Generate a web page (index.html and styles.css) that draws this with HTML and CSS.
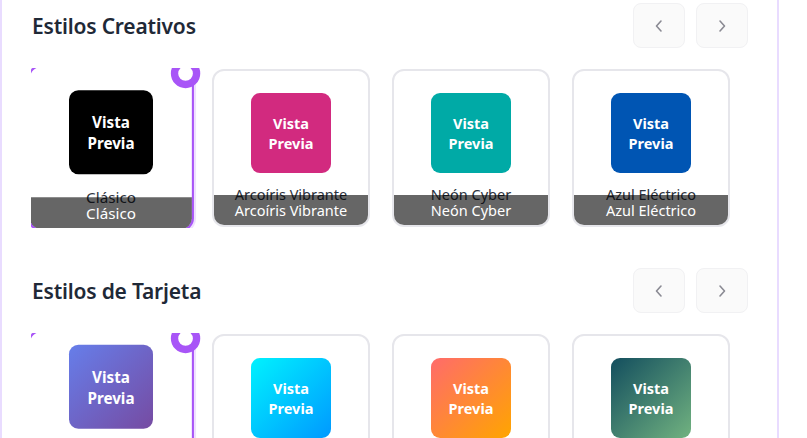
FILE: index.html
```html
<!DOCTYPE html>
<html lang="es">
<head>
<meta charset="utf-8">
<title>Estilos</title>
<link rel="stylesheet" href="styles.css">
</head>
<body>
<div class="panel">
  <section class="section">
    <div class="section-head">
      <h2 class="title">Estilos Creativos</h2>
      <div class="nav">
        <button class="nav-btn" aria-label="Anterior"><svg width="12" height="14" viewBox="0 0 12 14"><path d="M8 2 L3.5 7 L8 12" fill="none" stroke="#8a8a93" stroke-width="1.6" stroke-linecap="round" stroke-linejoin="round"/></svg></button>
        <button class="nav-btn" aria-label="Siguiente"><svg width="12" height="14" viewBox="0 0 12 14"><path d="M4 2 L8.5 7 L4 12" fill="none" stroke="#8a8a93" stroke-width="1.6" stroke-linecap="round" stroke-linejoin="round"/></svg></button>
      </div>
    </div>
    <div class="track">
      <div class="card selected">
        <span class="badge"></span>
        <div class="preview p-black">Vista<br>Previa</div>
        <div class="name">Clásico</div>
        <div class="overlay">Clásico</div>
      </div>
      <div class="card">
        <div class="preview p-pink">Vista<br>Previa</div>
        <div class="name">Arcoíris Vibrante</div>
        <div class="overlay">Arcoíris Vibrante</div>
      </div>
      <div class="card">
        <div class="preview p-teal">Vista<br>Previa</div>
        <div class="name">Neón Cyber</div>
        <div class="overlay">Neón Cyber</div>
      </div>
      <div class="card">
        <div class="preview p-blue">Vista<br>Previa</div>
        <div class="name">Azul Eléctrico</div>
        <div class="overlay">Azul Eléctrico</div>
      </div>
    </div>
  </section>

  <section class="section">
    <div class="section-head">
      <h2 class="title">Estilos de Tarjeta</h2>
      <div class="nav">
        <button class="nav-btn" aria-label="Anterior"><svg width="12" height="14" viewBox="0 0 12 14"><path d="M8 2 L3.5 7 L8 12" fill="none" stroke="#8a8a93" stroke-width="1.6" stroke-linecap="round" stroke-linejoin="round"/></svg></button>
        <button class="nav-btn" aria-label="Siguiente"><svg width="12" height="14" viewBox="0 0 12 14"><path d="M4 2 L8.5 7 L4 12" fill="none" stroke="#8a8a93" stroke-width="1.6" stroke-linecap="round" stroke-linejoin="round"/></svg></button>
      </div>
    </div>
    <div class="track">
      <div class="card selected card-tall">
        <span class="badge"></span>
        <div class="preview g-purple">Vista<br>Previa</div>
        <div class="name">Degradado</div>
        <div class="overlay">Degradado</div>
      </div>
      <div class="card">
        <div class="preview g-cyan">Vista<br>Previa</div>
        <div class="name">Océano</div>
        <div class="overlay">Océano</div>
      </div>
      <div class="card">
        <div class="preview g-sunset">Vista<br>Previa</div>
        <div class="name">Atardecer</div>
        <div class="overlay">Atardecer</div>
      </div>
      <div class="card">
        <div class="preview g-forest">Vista<br>Previa</div>
        <div class="name">Bosque</div>
        <div class="overlay">Bosque</div>
      </div>
    </div>
  </section>
</div>
</body>
</html>
```
FILE: styles.css
```css
* { box-sizing: border-box; }
html, body { margin: 0; padding: 0; background: #ffffff; }
body {
  font-family: "Noto Sans", "Open Sans", "Liberation Sans", sans-serif;
  color: #1f2937;
  height: 438px;
  overflow: hidden;
}
.panel {
  width: 779px;
  min-height: 438px;
  border-left: 2px solid #e9dcff;
  border-right: 2px solid #e9dcff;
  padding: 0 29px 0 29px;
}
.section { padding-top: 3px; margin-bottom: 37px; }
.section-head {
  height: 45px;
  display: flex;
  align-items: center;
  justify-content: space-between;
  margin-bottom: 20px;
}
.title {
  margin: 0;
  font-size: 21px;
  font-weight: 600;
  letter-spacing: -0.2px;
  color: #1f2937;
  padding-left: 1px;
}
.nav { display: flex; gap: 11px; }
.nav-btn {
  width: 52px;
  height: 45px;
  background: #fafafa;
  border: 1px solid #f1f1f3;
  border-radius: 8px;
  display: flex;
  align-items: center;
  justify-content: center;
  padding: 0;
}
.track {
  display: flex;
  gap: 22px;
  padding: 1px;
  overflow: hidden;
}
.card {
  position: relative;
  flex: 0 0 158px;
  height: 158px;
  border: 2px solid #e6e6eb;
  border-radius: 12px;
  background: #fff;
  overflow: visible;
  display: flex;
  flex-direction: column;
  align-items: center;
  padding-top: 22px;
}
.card.selected {
  border-color: #a855f7;
  box-shadow: 0 0 0 2px rgba(168, 85, 247, 0.18);
  transform: scale(1.05);
}
.badge {
  position: absolute;
  top: -8px;
  right: -8px;
  width: 28px;
  height: 28px;
  border-radius: 50%;
  background: #fff;
  border: 7px solid #a855f7;
  z-index: 2;
}
.preview {
  width: 80px;
  height: 80px;
  border-radius: 9px;
  color: #fff;
  font-weight: 700;
  font-size: 14.5px;
  line-height: 20px;
  display: flex;
  align-items: center;
  justify-content: center;
  text-align: center;
  flex: 0 0 auto;
}
.card-tall { padding-top: 12px; }
.name {
  margin-top: 12px;
  font-size: 14.5px;
  line-height: 18px;
  color: #2d3340;
  white-space: nowrap;
}
.overlay {
  position: absolute;
  left: 0;
  right: 0;
  bottom: 0;
  height: 30px;
  background: rgba(0, 0, 0, 0.6);
  color: #fff;
  font-size: 14.5px;
  line-height: 31px;
  text-align: center;
  border-radius: 0 0 10px 10px;
  white-space: nowrap;
}
.p-black { background: #000000; }
.p-pink { background: #d22a7f; }
.p-teal { background: #00aaa6; }
.p-blue { background: #0055b3; }
.g-purple { background: linear-gradient(135deg, #667eea, #764ba2); }
.g-cyan { background: linear-gradient(135deg, #00f2fe, #0099ff); }
.g-sunset { background: linear-gradient(135deg, #ff6b6b, #ffa500); }
.g-forest { background: linear-gradient(135deg, #134e5e, #71b280); }
```
